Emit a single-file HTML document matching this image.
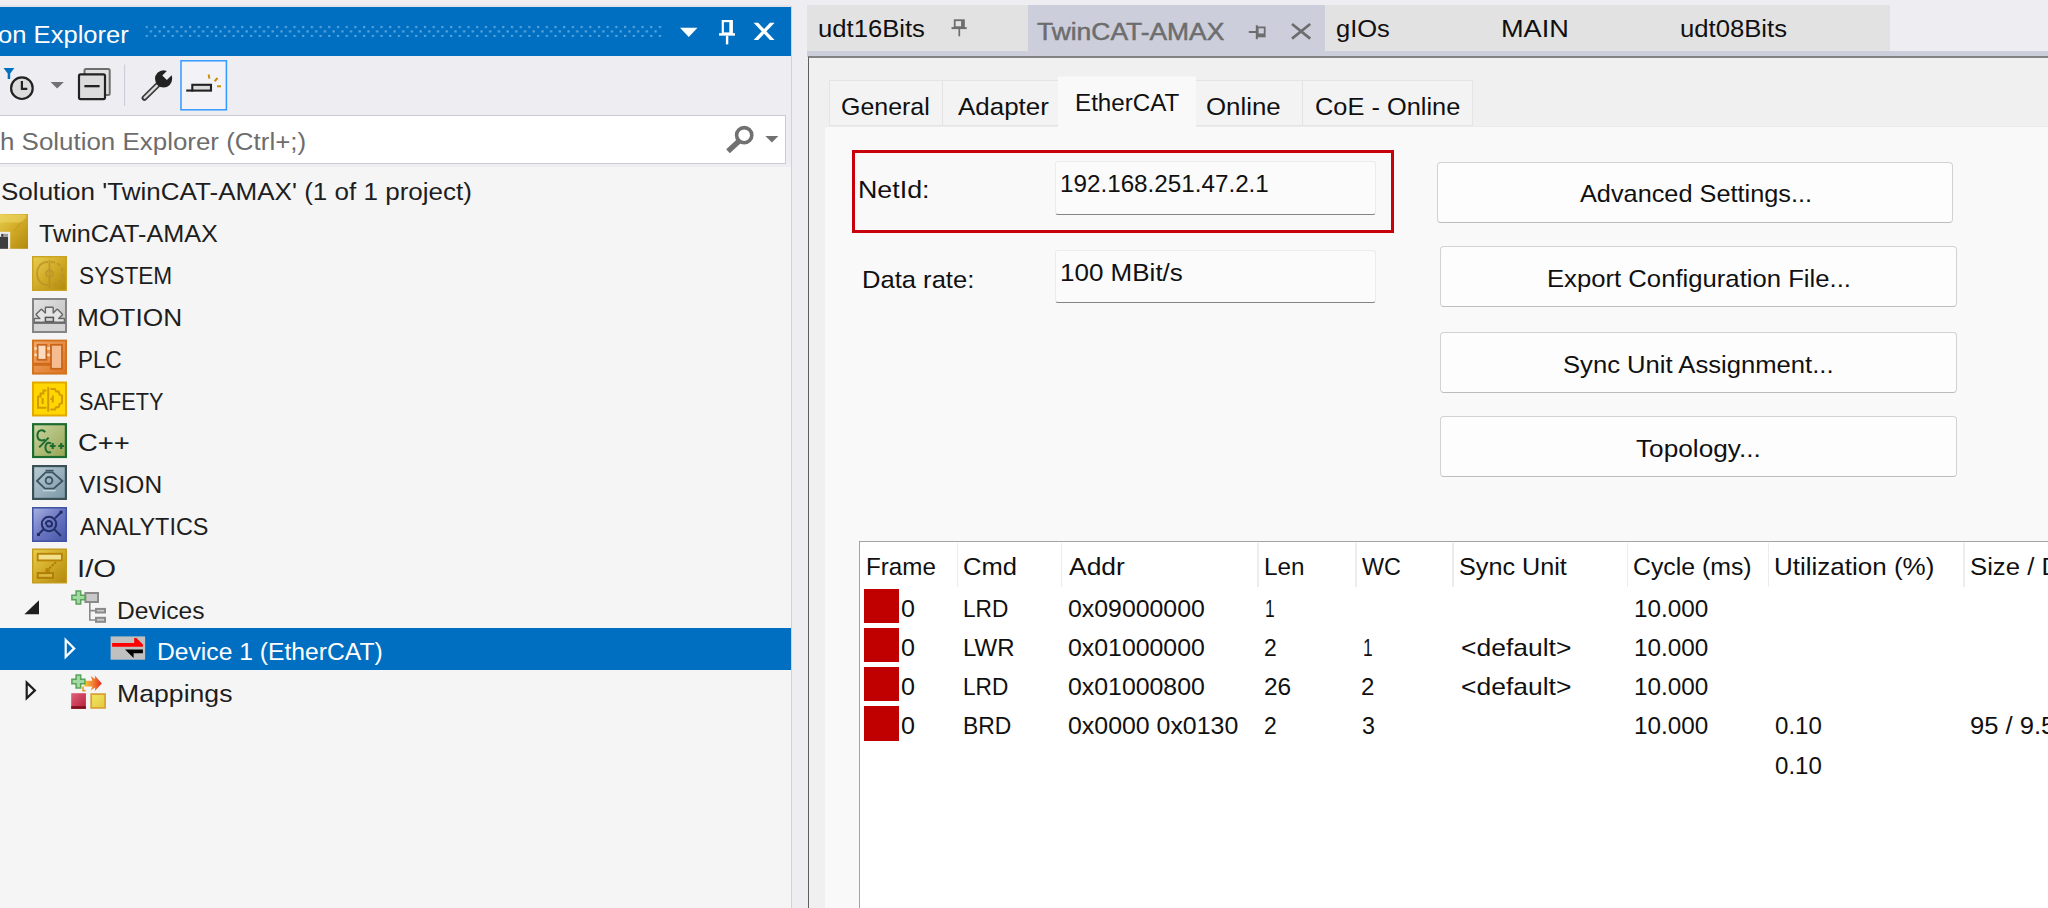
<!DOCTYPE html>
<html><head><meta charset="utf-8"><title>TwinCAT-AMAX</title>
<style>
html,body{margin:0;padding:0;}
body{width:2048px;height:908px;overflow:hidden;background:#eeeef2;position:relative;font-family:"Liberation Sans",sans-serif;}
.t{position:absolute;white-space:pre;line-height:1;transform-origin:0 0;}
.r{position:absolute;box-sizing:border-box;}
svg{position:absolute;overflow:visible;}
</style></head><body>
<div class="r" style="left:0px;top:5px;width:791px;height:2px;background:#e2e3ea;"></div>
<div class="r" style="left:0px;top:7px;width:790.8px;height:48.6px;background:#006fc1;"></div>
<span class="t" style="left:-1.94px;top:23.10px;font-size:24.6px;color:#ffffff;transform:scaleX(1.0402);">on Explorer</span>
<div class="r" style="left:-4px;top:115px;width:789.6px;height:48.6px;background:#ffffff;border:1.6px solid #c9cbdb;"></div>
<span class="t" style="left:-0.24px;top:130.10px;font-size:24.6px;color:#6d6d6d;transform:scaleX(1.0539);">h Solution Explorer (Ctrl+;)</span>
<div class="r" style="left:0px;top:166.5px;width:791px;height:742px;background:#f5f5f5;"></div>
<div class="r" style="left:790.8px;top:5.5px;width:1.4px;height:903px;background:#cfd1de;"></div>
<div class="r" style="left:0px;top:627.5px;width:791px;height:42px;background:#006fc1;"></div>
<span class="t" style="left:0.61px;top:180.10px;font-size:24.6px;color:#1e1e1e;transform:scaleX(1.0585);">Solution 'TwinCAT-AMAX' (1 of 1 project)</span>
<span class="t" style="left:39.09px;top:222.10px;font-size:24.6px;color:#1e1e1e;transform:scaleX(1.0252);">TwinCAT-AMAX</span>
<span class="t" style="left:78.56px;top:264.10px;font-size:24.6px;color:#1e1e1e;transform:scaleX(0.9223);">SYSTEM</span>
<span class="t" style="left:77.46px;top:306.10px;font-size:24.6px;color:#1e1e1e;transform:scaleX(1.0688);">MOTION</span>
<span class="t" style="left:77.78px;top:348.10px;font-size:24.6px;color:#1e1e1e;transform:scaleX(0.9111);">PLC</span>
<span class="t" style="left:78.61px;top:390.10px;font-size:24.6px;color:#1e1e1e;transform:scaleX(0.8818);">SAFETY</span>
<span class="t" style="left:78.21px;top:431.10px;font-size:24.6px;color:#1e1e1e;transform:scaleX(1.1136);">C++</span>
<span class="t" style="left:79.48px;top:473.10px;font-size:24.6px;color:#1e1e1e;transform:scaleX(0.9969);">VISION</span>
<span class="t" style="left:79.60px;top:515.10px;font-size:24.6px;color:#1e1e1e;transform:scaleX(0.9524);">ANALYTICS</span>
<span class="t" style="left:76.92px;top:557.10px;font-size:24.6px;color:#1e1e1e;transform:scaleX(1.1915);">I/O</span>
<span class="t" style="left:117.00px;top:599.10px;font-size:24.6px;color:#1e1e1e;transform:scaleX(0.9997);">Devices</span>
<span class="t" style="left:157.19px;top:640.10px;font-size:24.6px;color:#ffffff;transform:scaleX(1.0029);">Device 1 (EtherCAT)</span>
<span class="t" style="left:116.93px;top:682.10px;font-size:24.6px;color:#1e1e1e;transform:scaleX(1.0830);">Mappings</span>
<div class="r" style="left:807px;top:5px;width:1083px;height:46px;background:#e2e2e2;"></div>
<div class="r" style="left:1027.5px;top:5px;width:297.5px;height:46px;background:#ccceDB;"></div>
<div class="r" style="left:807px;top:51px;width:1241px;height:5.5px;background:#ccceDB;"></div>
<div class="r" style="left:1890px;top:0px;width:158px;height:51px;background:#eeeef2;"></div>
<span class="t" style="left:818.11px;top:17.10px;font-size:24.6px;color:#101010;transform:scaleX(1.0427);">udt16Bits</span>
<span class="t" style="left:1037.07px;top:20.10px;font-size:24.8px;color:#6d6d6d;transform:scaleX(1.0651);-webkit-text-stroke:0.5px #6d6d6d;">TwinCAT-AMAX</span>
<span class="t" style="left:1335.56px;top:17.10px;font-size:24.6px;color:#101010;transform:scaleX(1.0374);">gIOs</span>
<span class="t" style="left:1501.39px;top:17.10px;font-size:24.6px;color:#101010;transform:scaleX(1.1043);">MAIN</span>
<span class="t" style="left:1680.40px;top:17.10px;font-size:24.6px;color:#101010;transform:scaleX(1.0437);">udt08Bits</span>
<div class="r" style="left:807.6px;top:56px;width:1241px;height:853px;background:#f0f0f0;border-left:1.8px solid #5e5e5e;border-top:2px solid #828282;"></div>
<div class="r" style="left:828.5px;top:80.3px;width:644px;height:46px;background:#f3f3f3;border:1px solid #e4e4e4;"></div>
<div class="r" style="left:942px;top:80.5px;width:1px;height:45px;background:#e3e3e3;"></div>
<div class="r" style="left:1302px;top:80.5px;width:1px;height:45px;background:#e3e3e3;"></div>
<div class="r" style="left:825px;top:125.5px;width:1223px;height:783px;background:#f9f9f9;border-top:1px solid #ebebeb;"></div>
<div class="r" style="left:1057.6px;top:76.2px;width:138.8px;height:50.8px;background:#f9f9f9;border-top:1px solid #f4f4f4;"></div>
<span class="t" style="left:841.33px;top:95.10px;font-size:24.6px;color:#101010;transform:scaleX(1.0147);">General</span>
<span class="t" style="left:957.60px;top:95.10px;font-size:24.6px;color:#101010;transform:scaleX(1.0554);">Adapter</span>
<span class="t" style="left:1074.63px;top:91.10px;font-size:24.6px;color:#101010;transform:scaleX(0.9831);">EtherCAT</span>
<span class="t" style="left:1206.42px;top:95.10px;font-size:24.6px;color:#101010;transform:scaleX(1.0507);">Online</span>
<span class="t" style="left:1315.31px;top:95.10px;font-size:24.6px;color:#101010;transform:scaleX(1.0316);">CoE - Online</span>
<div class="r" style="left:851.5px;top:149.6px;width:542.5px;height:83.6px;background:transparent;border:3px solid #c8000c;"></div>
<span class="t" style="left:858.42px;top:178.10px;font-size:24.6px;color:#101010;transform:scaleX(1.0894);">NetId:</span>
<span class="t" style="left:861.52px;top:268.10px;font-size:24.6px;color:#101010;transform:scaleX(1.0397);">Data rate:</span>
<div class="r" style="left:1055px;top:161px;width:321px;height:53.6px;background:#fbfbfb;border:1px solid #ececec;border-bottom:1.5px solid #858585;border-radius:3px;"></div>
<div class="r" style="left:1055px;top:250.2px;width:321px;height:53px;background:#fbfbfb;border:1px solid #ececec;border-bottom:1.5px solid #858585;border-radius:3px;"></div>
<span class="t" style="left:1059.75px;top:172.10px;font-size:24.6px;color:#101010;transform:scaleX(0.9851);">192.168.251.47.2.1</span>
<span class="t" style="left:1059.62px;top:261.10px;font-size:24.6px;color:#101010;transform:scaleX(1.0573);">100 MBit/s</span>
<div class="r" style="left:1437px;top:162px;width:516px;height:61px;background:#fdfdfd;border:1px solid #d2d2d2;border-bottom-color:#bdbdbd;border-radius:4px;"></div>
<div class="r" style="left:1440px;top:246px;width:517px;height:61px;background:#fdfdfd;border:1px solid #d2d2d2;border-bottom-color:#bdbdbd;border-radius:4px;"></div>
<div class="r" style="left:1440px;top:332px;width:517px;height:61px;background:#fdfdfd;border:1px solid #d2d2d2;border-bottom-color:#bdbdbd;border-radius:4px;"></div>
<div class="r" style="left:1440px;top:416px;width:517px;height:61px;background:#fdfdfd;border:1px solid #d2d2d2;border-bottom-color:#bdbdbd;border-radius:4px;"></div>
<span class="t" style="left:1579.60px;top:182.10px;font-size:24.6px;color:#101010;transform:scaleX(1.0285);">Advanced Settings...</span>
<span class="t" style="left:1546.51px;top:267.10px;font-size:24.6px;color:#101010;transform:scaleX(1.0439);">Export Configuration File...</span>
<span class="t" style="left:1562.93px;top:353.10px;font-size:24.6px;color:#101010;transform:scaleX(1.0419);">Sync Unit Assignment...</span>
<span class="t" style="left:1636.07px;top:437.10px;font-size:24.6px;color:#101010;transform:scaleX(1.0655);">Topology...</span>
<div class="r" style="left:858.5px;top:541px;width:1200px;height:380px;background:#ffffff;border:1.5px solid #a3a3a3;"></div>
<div class="r" style="left:956.5px;top:543px;width:1.5px;height:44px;background:#ececec;"></div>
<div class="r" style="left:1060.5px;top:543px;width:1.5px;height:44px;background:#ececec;"></div>
<div class="r" style="left:1257.0px;top:543px;width:1.5px;height:44px;background:#ececec;"></div>
<div class="r" style="left:1355.0px;top:543px;width:1.5px;height:44px;background:#ececec;"></div>
<div class="r" style="left:1452.0px;top:543px;width:1.5px;height:44px;background:#ececec;"></div>
<div class="r" style="left:1626.5px;top:543px;width:1.5px;height:44px;background:#ececec;"></div>
<div class="r" style="left:1767.5px;top:543px;width:1.5px;height:44px;background:#ececec;"></div>
<div class="r" style="left:1963.0px;top:543px;width:1.5px;height:44px;background:#ececec;"></div>
<span class="t" style="left:865.63px;top:555.10px;font-size:24.6px;color:#101010;transform:scaleX(0.9835);">Frame</span>
<span class="t" style="left:963.30px;top:555.10px;font-size:24.6px;color:#101010;transform:scaleX(1.0382);">Cmd</span>
<span class="t" style="left:1068.60px;top:555.10px;font-size:24.6px;color:#101010;transform:scaleX(1.0751);">Addr</span>
<span class="t" style="left:1263.63px;top:555.10px;font-size:24.6px;color:#101010;transform:scaleX(0.9867);">Len</span>
<span class="t" style="left:1362.48px;top:555.10px;font-size:24.6px;color:#101010;transform:scaleX(0.9500);">WC</span>
<span class="t" style="left:1458.95px;top:555.10px;font-size:24.6px;color:#101010;transform:scaleX(1.0240);">Sync Unit</span>
<span class="t" style="left:1632.84px;top:555.10px;font-size:24.6px;color:#101010;transform:scaleX(1.0098);">Cycle (ms)</span>
<span class="t" style="left:1773.62px;top:555.10px;font-size:24.6px;color:#101010;transform:scaleX(1.0572);">Utilization (%)</span>
<span class="t" style="left:1969.92px;top:555.10px;font-size:24.6px;color:#101010;transform:scaleX(1.0450);">Size / D</span>
<div class="r" style="left:864.2px;top:588.8px;width:34.5px;height:34.3px;background:#c00000;"></div>
<div class="r" style="left:864.2px;top:628px;width:34.5px;height:34.3px;background:#c00000;"></div>
<div class="r" style="left:864.2px;top:667.2px;width:34.5px;height:34.3px;background:#c00000;"></div>
<div class="r" style="left:864.2px;top:706.4px;width:34.5px;height:34.3px;background:#c00000;"></div>
<span class="t" style="left:900.58px;top:597.10px;font-size:24.6px;color:#101010;transform:scaleX(1.0213);">0</span>
<span class="t" style="left:1633.75px;top:597.10px;font-size:24.6px;color:#101010;transform:scaleX(0.9862);">10.000</span>
<span class="t" style="left:900.58px;top:636.10px;font-size:24.6px;color:#101010;transform:scaleX(1.0213);">0</span>
<span class="t" style="left:1633.75px;top:636.10px;font-size:24.6px;color:#101010;transform:scaleX(0.9862);">10.000</span>
<span class="t" style="left:900.58px;top:675.10px;font-size:24.6px;color:#101010;transform:scaleX(1.0213);">0</span>
<span class="t" style="left:1633.75px;top:675.10px;font-size:24.6px;color:#101010;transform:scaleX(0.9862);">10.000</span>
<span class="t" style="left:900.58px;top:714.10px;font-size:24.6px;color:#101010;transform:scaleX(1.0213);">0</span>
<span class="t" style="left:1633.75px;top:714.10px;font-size:24.6px;color:#101010;transform:scaleX(0.9862);">10.000</span>
<span class="t" style="left:963.26px;top:597.10px;font-size:24.6px;color:#101010;transform:scaleX(0.9214);">LRD</span>
<span class="t" style="left:963.15px;top:636.10px;font-size:24.6px;color:#101010;transform:scaleX(0.9749);">LWR</span>
<span class="t" style="left:963.26px;top:675.10px;font-size:24.6px;color:#101010;transform:scaleX(0.9214);">LRD</span>
<span class="t" style="left:963.24px;top:714.10px;font-size:24.6px;color:#101010;transform:scaleX(0.9309);">BRD</span>
<span class="t" style="left:1067.59px;top:597.10px;font-size:24.6px;color:#101010;transform:scaleX(1.0103);">0x09000000</span>
<span class="t" style="left:1067.59px;top:636.10px;font-size:24.6px;color:#101010;transform:scaleX(1.0103);">0x01000000</span>
<span class="t" style="left:1067.59px;top:675.10px;font-size:24.6px;color:#101010;transform:scaleX(1.0103);">0x01000800</span>
<span class="t" style="left:1067.59px;top:714.10px;font-size:24.6px;color:#101010;transform:scaleX(1.0120);">0x0000 0x0130</span>
<span class="t" style="left:1265.28px;top:597.10px;font-size:24.6px;color:#101010;transform:scaleX(0.7059);">1</span>
<span class="t" style="left:1263.93px;top:636.10px;font-size:24.6px;color:#101010;transform:scaleX(0.9333);">2</span>
<span class="t" style="left:1263.86px;top:675.10px;font-size:24.6px;color:#101010;transform:scaleX(0.9950);">26</span>
<span class="t" style="left:1263.93px;top:714.10px;font-size:24.6px;color:#101010;transform:scaleX(0.9333);">2</span>
<span class="t" style="left:1363.28px;top:636.10px;font-size:24.6px;color:#101010;transform:scaleX(0.7059);">1</span>
<span class="t" style="left:1361.38px;top:675.10px;font-size:24.6px;color:#101010;transform:scaleX(0.9778);">2</span>
<span class="t" style="left:1361.65px;top:714.10px;font-size:24.6px;color:#101010;transform:scaleX(0.9462);">3</span>
<span class="t" style="left:1461.26px;top:636.10px;font-size:24.6px;color:#101010;transform:scaleX(1.0760);">&lt;default&gt;</span>
<span class="t" style="left:1461.26px;top:675.10px;font-size:24.6px;color:#101010;transform:scaleX(1.0760);">&lt;default&gt;</span>
<span class="t" style="left:1774.62px;top:714.10px;font-size:24.6px;color:#101010;transform:scaleX(0.9783);">0.10</span>
<span class="t" style="left:1774.62px;top:754.10px;font-size:24.6px;color:#101010;transform:scaleX(0.9783);">0.10</span>
<span class="t" style="left:1970.03px;top:714.10px;font-size:24.6px;color:#101010;transform:scaleX(1.0400);">95 / 9.5</span>
<svg width="2048" height="908" viewBox="0 0 2048 908" style="left:0;top:0">
<defs>
<pattern id="dots" x="145.5" y="25.8" width="8.7" height="9.1" patternUnits="userSpaceOnUse">
<rect x="0" y="0" width="2.2" height="2.2" fill="#5ba6de"/><rect x="4.35" y="4.55" width="2.2" height="2.2" fill="#5ba6de"/></pattern>
<linearGradient id="gGold" x1="0" y1="0" x2="1" y2="1"><stop offset="0" stop-color="#e8cd50"/><stop offset="0.45" stop-color="#d4ae2a"/><stop offset="1" stop-color="#b2880c"/></linearGradient>
<linearGradient id="gGray" x1="0" y1="0" x2="1" y2="1"><stop offset="0" stop-color="#e4e4e4"/><stop offset="1" stop-color="#bcbcbc"/></linearGradient>
<linearGradient id="gOrange" x1="0" y1="0" x2="1" y2="1"><stop offset="0" stop-color="#f3aa6e"/><stop offset="1" stop-color="#dd7420"/></linearGradient>
<linearGradient id="gGreen" x1="0" y1="0" x2="1" y2="1"><stop offset="0" stop-color="#cdd6a2"/><stop offset="1" stop-color="#93a552"/></linearGradient>
<linearGradient id="gSteel" x1="0" y1="0" x2="1" y2="1"><stop offset="0" stop-color="#b9ccd6"/><stop offset="1" stop-color="#7b97a6"/></linearGradient>
<linearGradient id="gViolet" x1="0" y1="0" x2="1" y2="1"><stop offset="0" stop-color="#aab2e2"/><stop offset="0.5" stop-color="#6a76c2"/><stop offset="1" stop-color="#4656a6"/></linearGradient>
<linearGradient id="gRed" x1="0" y1="0" x2="1" y2="1"><stop offset="0" stop-color="#e0607a"/><stop offset="1" stop-color="#b82038"/></linearGradient>
<linearGradient id="gYel" x1="0" y1="0" x2="1" y2="1"><stop offset="0" stop-color="#f0e868"/><stop offset="1" stop-color="#e4c838"/></linearGradient>
<linearGradient id="gArrow" x1="0" y1="0" x2="1" y2="0"><stop offset="0" stop-color="#f6d040"/><stop offset="0.6" stop-color="#f07030"/><stop offset="1" stop-color="#e02818"/></linearGradient>
</defs>
<rect x="145.5" y="25.8" width="517" height="11.3" fill="url(#dots)"/>
<path d="M680 27.8 L697.5 27.8 L688.75 36.9 Z" fill="#fff"/>
<g fill="none" stroke="#fff" stroke-width="2.2"><rect x="722.8" y="21.1" width="8.8" height="12.4"/><path d="M731 20 V34" stroke-width="3.4"/><path d="M719 34.4 H735" stroke-width="2.5"/><path d="M727.1 35.6 V44.4" stroke-width="2.4"/></g>
<path d="M753.6 22.8 H758.2 L774.6 40 H770 Z" fill="#fff"/><path d="M774.6 22.8 H770 L753.6 40 H758.2 Z" fill="#fff"/>
<path d="M3.5 68 H14.4 L10.2 73.6 V79 L7.7 79 V73.6 Z" fill="#0070c0"/>
<circle cx="21.9" cy="88.2" r="10.8" fill="#dcdcdc" stroke="#222" stroke-width="2.2"/>
<path d="M21.9 81 V88.8 H27.3" fill="none" stroke="#222" stroke-width="2.2"/>
<path d="M50.6 81.9 H63.8 L57.2 88.6 Z" fill="#717171"/>
<rect x="84.5" y="69" width="25.2" height="26" rx="1.5" fill="#e0e0e0" stroke="#6e6e6e" stroke-width="2"/>
<rect x="79" y="74.3" width="26" height="24.8" rx="1.5" fill="#dcdcdc" stroke="#222" stroke-width="2.2"/>
<rect x="84.4" y="85" width="15.2" height="2.3" fill="#222"/>
<rect x="124" y="64.5" width="1.2" height="41.3" fill="#ccceDB"/>
<path d="M157.6 85 L144.4 98" stroke="#3c3c3c" stroke-width="5.6" stroke-linecap="round"/>
<path d="M157 85.6 L144.6 97.8" stroke="#dedede" stroke-width="2.2" stroke-linecap="round"/>
<circle cx="163.6" cy="78.8" r="8.6" fill="#222"/>
<path d="M164.6 77.8 L173.6 68.8" stroke="#eeeef2" stroke-width="6.4"/>
<rect x="181" y="60.8" width="45.4" height="49" fill="#f3f3f7" stroke="#3399ff" stroke-width="1.5"/>
<rect x="192.3" y="84.8" width="18.7" height="5.8" fill="#dcdcdc" stroke="#222" stroke-width="2.1"/>
<rect x="186.2" y="89.5" width="7" height="2.1" fill="#222"/>
<g stroke="#c8900a" stroke-width="2" fill="none"><path d="M208.6 74.5 L209.4 78.6"/><path d="M214.6 81.2 L217.6 78"/><path d="M217 86.3 H221"/></g>
<circle cx="744.2" cy="135.2" r="7.6" fill="none" stroke="#717171" stroke-width="3.6"/>
<path d="M738.6 141.6 L728 151.2" stroke="#717171" stroke-width="5.4"/>
<path d="M765.4 136 H778.4 L771.9 142.6 Z" fill="#717171"/>
<rect x="-2" y="214" width="30" height="34.8" fill="url(#gGold)"/>
<path d="M-2 214.8 H26 V217.6 L21 222.6 H-2 Z" fill="#efd868" opacity="0.55"/>
<path d="M21.6 222 L13.6 231.6" stroke="#c49c1c" stroke-width="1.6" opacity="0.6"/>
<rect x="-2" y="231.8" width="12.2" height="17" fill="#ececec"/>
<rect x="-2" y="236.8" width="10" height="12" fill="#3e3e3e"/>
<rect x="1.2" y="233.9" width="2.4" height="2.9" fill="#3e3e3e"/>
<rect x="3.6" y="233.9" width="4.4" height="2.9" fill="#9c9c9c"/>
<rect x="32.7" y="256.7" width="33.6" height="33.6" fill="url(#gGold)" stroke="#c9a422" stroke-width="1.4"/>
<g fill="none" stroke="#b8922a" stroke-width="1.8" opacity="0.8"><path d="M48 262 C40 262 37 268 37 273.5 C37 279 40 285 48 285"/><path d="M49.5 260 V288"/><path d="M51 262 C60 262 62.5 268 62.5 273.5 C62.5 279 60 285 51 285" stroke-dasharray="4 2.2"/><circle cx="49.5" cy="273.5" r="3.4"/></g>
<rect x="33.0" y="299.0" width="33" height="33" fill="url(#gGray)" stroke="#858585" stroke-width="2"/>
<clipPath id="cpM"><rect x="33" y="300" width="33" height="21.8"/></clipPath>
<g clip-path="url(#cpM)" fill="#666" stroke="#666" stroke-width="2.8" stroke-linejoin="round"><circle cx="49.3" cy="322.4" r="9.6"/><rect x="46.1" y="308" width="6.4" height="7" transform="rotate(-90 49.3 322.4)"/><rect x="46.1" y="308" width="6.4" height="7" transform="rotate(-45 49.3 322.4)"/><rect x="46.1" y="308" width="6.4" height="7" transform="rotate(0 49.3 322.4)"/><rect x="46.1" y="308" width="6.4" height="7" transform="rotate(45 49.3 322.4)"/><rect x="46.1" y="308" width="6.4" height="7" transform="rotate(90 49.3 322.4)"/></g>
<g clip-path="url(#cpM)" fill="#e4e4e4" stroke="none" stroke-width="0" stroke-linejoin="round"><circle cx="49.3" cy="322.4" r="9.6"/><rect x="46.1" y="308" width="6.4" height="7" transform="rotate(-90 49.3 322.4)"/><rect x="46.1" y="308" width="6.4" height="7" transform="rotate(-45 49.3 322.4)"/><rect x="46.1" y="308" width="6.4" height="7" transform="rotate(0 49.3 322.4)"/><rect x="46.1" y="308" width="6.4" height="7" transform="rotate(45 49.3 322.4)"/><rect x="46.1" y="308" width="6.4" height="7" transform="rotate(90 49.3 322.4)"/></g>
<rect x="45.4" y="317.4" width="8" height="4.2" fill="#d8d8d8" stroke="#555" stroke-width="1.5"/>
<rect x="33.5" y="321.6" width="32" height="2.3" fill="#6a6a6a"/>
<rect x="34" y="324" width="31" height="6.8" fill="#d4d4d4"/>
<rect x="33.0" y="340.6" width="33" height="33" fill="url(#gOrange)" stroke="#d4731e" stroke-width="2"/>
<rect x="37.6" y="344.8" width="8.8" height="15" fill="#fbdcc0" stroke="#c8651a" stroke-width="1.8"/>
<rect x="51" y="344.8" width="11" height="24" fill="#f4bc90" stroke="#c8651a" stroke-width="1.8"/>
<rect x="34" y="362.8" width="16.4" height="3" fill="#cf6a1a"/>
<g fill="#fbdcc0"><rect x="34.4" y="347.2" width="2.4" height="2.6"/><rect x="34.4" y="353.6" width="2.4" height="2.6"/><rect x="47.2" y="347.2" width="2.8" height="2.6"/><rect x="47.2" y="353.6" width="2.8" height="2.6"/></g>
<rect x="33.0" y="382.5" width="33" height="33" fill="#ffd600" stroke="#e2aa00" stroke-width="2"/>
<g fill="none" stroke="#d39a00" stroke-width="2"><path d="M48.2 387 V411.6"/><path d="M46.4 390.6 H43.4 V393.6 H40.6 V396.6 H38 V407.8 H46.4"/><path d="M42.6 398 V404"/><path d="M50.4 389 H55 L56 391.4 H58.6 L59.6 394.6 L62 395.6 V403 L59.6 404 L58.6 407.2 H56 L55 409.6 H50.4" stroke-linejoin="round"/><path d="M52.8 395.6 V402.4 M50.4 399 H52.8"/></g>
<rect x="33.1" y="424.20000000000005" width="32.8" height="32.8" fill="url(#gGreen)" stroke="#1c6b30" stroke-width="2.2"/>
<g fill="none" stroke="#1c6b30" stroke-width="2"><path d="M45.2 432.2 C43 428.8 37.4 429.8 37.4 435.2 C37.4 440.6 41.6 441.2 45 439.6"/><path d="M48.6 437.6 L39.2 447.4"/><path d="M51 443.4 C47.4 441.4 45.4 444.6 45.4 447.4 C45.4 451.4 48 453.2 51 452"/><path d="M49.8 446 H55.6 M52.7 443.1 V448.9 M58.3 446 H64.1 M61.2 443.1 V448.9" stroke-width="2.2"/></g>
<rect x="33.1" y="466.1" width="32.8" height="32.8" fill="url(#gSteel)" stroke="#3c5058" stroke-width="2.2"/>
<g fill="none" stroke="#3c5560" stroke-width="1.8"><path d="M37 481 L45.6 472.4 H52.6 L62.4 481 L53.6 488.6 H45 Z"/><circle cx="49" cy="480.4" r="3.4"/><path d="M45.6 470.6 H53.6" stroke-width="1.6"/></g>
<path d="M43 490.6 H55.6" stroke="#c4d4dc" stroke-width="1.6"/>
<rect x="32.8" y="507.8" width="33.4" height="33.4" fill="url(#gViolet)" stroke="#4454a4" stroke-width="1.6"/>
<g fill="none" stroke="#222e66" stroke-width="2"><circle cx="49" cy="524" r="7.2"/><path d="M45.8 524.4 C45.8 520 52 520 52 524 C52 527.6 47 527.2 47 524.4"/><path d="M55 518.4 L61.6 511.8 M54.6 529.6 L61 536 M43.6 529.2 L38.2 534.6"/><rect x="37" y="533" width="3" height="3" fill="#222e66" stroke="none"/><rect x="59.6" y="510.6" width="3" height="3" fill="#222e66" stroke="none"/></g>
<rect x="32.7" y="549.2" width="33.6" height="33.6" fill="url(#gGold)" stroke="#c39a1a" stroke-width="1.4"/>
<rect x="37.7" y="553.8" width="24.2" height="6.6" fill="#f3e08c" stroke="#b88408" stroke-width="1.9"/>
<path d="M56 562 L48 569.6" stroke="#b07e06" stroke-width="2" stroke-dasharray="2.4 1"/>
<rect x="45.5" y="568.3" width="4.3" height="4.5" fill="#b88408"/>
<rect x="37.7" y="573.1" width="15.3" height="4.7" fill="#dcb840" stroke="#b07e06" stroke-width="2"/>
<path d="M39 600.3 V614.2 H24.4 Z" fill="#1e1e1e"/>
<g fill="#c9c9c9" stroke="#8a8a8a" stroke-width="2"><rect x="85.4" y="593" width="12.6" height="9"/><rect x="96" y="608.9" width="9" height="3.6"/><rect x="96" y="617.8" width="9" height="4"/></g>
<path d="M89.8 603 V620 H96 M89.8 610.6 H96" fill="none" stroke="#8a8a8a" stroke-width="1.6"/>
<path d="M76.1 591.0 h4.6 v4.2 h4.2 v4.6 h-4.2 v4.2 h-4.6 v-4.2 h-4.2 v-4.6 h4.2 Z" fill="#a4d8a4" stroke="#58a458" stroke-width="1.5"/>
<path d="M65.7 640 L74.2 648.4 L65.7 656.8 Z" fill="none" stroke="#fff" stroke-width="2.2"/>
<rect x="110.6" y="636.4" width="34.5" height="23.3" fill="#c0c0c0"/>
<path d="M112.1 643 H134.2 V638 H136.4 L142.9 644.4 V646.8 H112.1 Z" fill="#ff0000"/>
<path d="M142.9 649.6 H125 L133.6 658 V653.3 H142.9 Z" fill="#000"/>
<path d="M26.7 682.6 L34.9 690.4 L26.7 698.2 Z" fill="none" stroke="#1e1e1e" stroke-width="2.2"/>
<path d="M84 680.8 H92.4 L90.6 676 L95.2 679 L94.8 675.6 L101.8 683.4 L94.8 690.9 L95.2 687.6 L90.6 690.6 L92.4 686.4 H84 Z" fill="url(#gArrow)"/>
<rect x="71.2" y="693.2" width="14.7" height="15.6" fill="url(#gRed)"/><rect x="71.2" y="706.2" width="14.7" height="2.6" fill="#7e1020"/>
<rect x="91.2" y="694.1" width="13.9" height="13.8" fill="url(#gYel)" stroke="#d9a23a" stroke-width="1.8"/>
<path d="M76.1 675.0 h4.6 v4.2 h4.2 v4.6 h-4.2 v4.2 h-4.6 v-4.2 h-4.2 v-4.6 h4.2 Z" fill="#a4d8a4" stroke="#58a458" stroke-width="1.5"/>
<path d="M83 686.6 V690.6 H85.6" stroke="#e0a030" stroke-width="1.6" fill="none"/>
<g fill="none" stroke="#6d6d6d" stroke-width="1.8"><rect x="954.7" y="20.2" width="9.2" height="7"/><path d="M962.6 20 V27.6" stroke-width="3"/><path d="M951.5 28.1 H966.7" stroke-width="2"/><path d="M959.3 29 V36.3" stroke-width="1.7"/></g>
<g fill="none" stroke="#6d6d6d" stroke-width="1.8"><path d="M1248.8 32 H1256" stroke-width="2"/><path d="M1256.8 25.2 V39.2" stroke-width="2"/><rect x="1257.7" y="27.4" width="7" height="9"/><path d="M1257.7 35 H1265" stroke-width="3"/></g>
<path d="M1292 24 L1310.2 38.6 M1310.2 24 L1292 38.6" stroke="#6d6d6d" stroke-width="2.7" fill="none"/>
</svg>
</body></html>
